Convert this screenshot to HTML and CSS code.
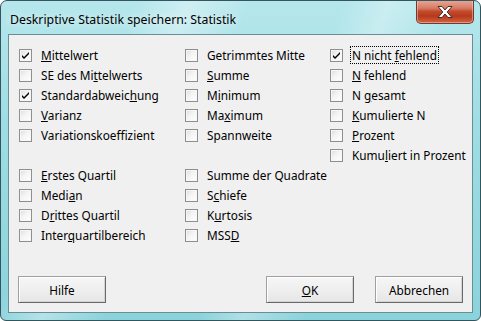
FILE: index.html
```html
<!DOCTYPE html>
<html>
<head>
    <title>Deskriptive Statistik speichern: Statistik</title>
    <link rel="stylesheet" href="styles.css">
</head>
<body>
    <div class="window">
        <div class="titlebar">
            <span class="title">Deskriptive Statistik speichern: Statistik</span>
            <div class="close-btn">
                <svg width="20" height="14" viewBox="0 0 20 14">
                    <path d="M3 1.5 L7 1.5 L10 5 L13 1.5 L17 1.5 L12.2 7 L17 12.5 L13 12.5 L10 9 L7 12.5 L3 12.5 L7.8 7 Z" fill="#fff" stroke="#4a2a24" stroke-width="1" stroke-linejoin="round"/>
                </svg>
            </div>
        </div>

        <div class="client">
            <div class="options">
                <div class="col col-1">
                    <div class="group">
                        <div class="opt"><span class="box checked"></span><span class="label"><u>M</u>ittelwert</span></div>
                        <div class="opt"><span class="box"></span><span class="label">SE des Mi<u>t</u>telwerts</span></div>
                        <div class="opt"><span class="box checked"></span><span class="label">Standardabweic<u>h</u>ung</span></div>
                        <div class="opt"><span class="box"></span><span class="label"><u>V</u>arianz</span></div>
                        <div class="opt"><span class="box"></span><span class="label">Variationskoeffizient</span></div>
                    </div>
                    <div class="group group-lower">
                        <div class="opt"><span class="box"></span><span class="label"><u>E</u>rstes Quartil</span></div>
                        <div class="opt"><span class="box"></span><span class="label">Medi<u>a</u>n</span></div>
                        <div class="opt"><span class="box"></span><span class="label">D<u>r</u>ittes Quartil</span></div>
                        <div class="opt"><span class="box"></span><span class="label">Inter<u>q</u>uartilbereich</span></div>
                    </div>
                </div>

                <div class="col col-2">
                    <div class="group">
                        <div class="opt"><span class="box"></span><span class="label">Getrimmtes Mitte</span></div>
                        <div class="opt"><span class="box"></span><span class="label"><u>S</u>umme</span></div>
                        <div class="opt"><span class="box"></span><span class="label">M<u>i</u>nimum</span></div>
                        <div class="opt"><span class="box"></span><span class="label">Ma<u>x</u>imum</span></div>
                        <div class="opt"><span class="box"></span><span class="label">Spannweite</span></div>
                    </div>
                    <div class="group group-lower">
                        <div class="opt"><span class="box"></span><span class="label">Summe der Quadrate</span></div>
                        <div class="opt"><span class="box"></span><span class="label">S<u>c</u>hiefe</span></div>
                        <div class="opt"><span class="box"></span><span class="label">K<u>u</u>rtosis</span></div>
                        <div class="opt"><span class="box"></span><span class="label">MSS<u>D</u></span></div>
                    </div>
                </div>

                <div class="col col-3">
                    <div class="group">
                        <div class="opt"><span class="box checked"></span><span class="label focused">N nicht <u>f</u>ehlend</span></div>
                        <div class="opt"><span class="box"></span><span class="label"><u>N</u> fehlend</span></div>
                        <div class="opt"><span class="box"></span><span class="label">N <u>g</u>esamt</span></div>
                        <div class="opt"><span class="box"></span><span class="label"><u>K</u>umulierte N</span></div>
                        <div class="opt"><span class="box"></span><span class="label"><u>P</u>rozent</span></div>
                        <div class="opt"><span class="box"></span><span class="label">Kumu<u>l</u>iert in Prozent</span></div>
                    </div>
                </div>
            </div>

            <div class="buttons">
                <button class="btn">Hilfe</button>
                <div class="buttons-right">
                    <button class="btn"><u>O</u>K</button>
                    <button class="btn">Abbrechen</button>
                </div>
            </div>
        </div>
    </div>
</body>
</html>
```

FILE: styles.css
```css
body {
    margin: 0;
    background: #fff;
    font-family: "Noto Sans", "Open Sans", sans-serif;
    font-size: 11.8px;
    color: #000;
}
.window {
    width: 481px;
    height: 321px;
    box-sizing: border-box;
    border: 1px solid #34555e;
    border-radius: 7px 7px 6px 6px;
    background:
        linear-gradient(115deg, rgba(255,255,255,0) 22%, rgba(255,255,255,0.35) 30%, rgba(255,255,255,0) 40%, rgba(255,255,255,0) 55%, rgba(255,255,255,0.3) 62%, rgba(255,255,255,0) 72%),
        linear-gradient(180deg, #b5e7ec 0%, #9edde4 40%, #8bd3db 100%);
    display: flex;
    flex-direction: column;
    overflow: hidden;
}
.titlebar {
    height: 33px;
    display: flex;
    justify-content: space-between;
    align-items: flex-start;
    flex-shrink: 0;
}
.title {
    margin: 10px 0 0 9px;
    font-size: 12.3px;
    color: #000;
    line-height: 17px;
    text-shadow: 0 0 8px rgba(255,255,255,0.9);
}
.close-btn {
    width: 58px;
    height: 24px;
    margin: -1px 6px 0 0;
    box-sizing: border-box;
    border: 1px solid #6e3a32;
    border-top: none;
    border-radius: 0 0 5px 5px;
    background: linear-gradient(180deg, #e9a899 0%, #d77c66 35%, #c24a2c 50%, #b8391c 70%, #d0643f 100%);
    box-shadow: inset 0 0 0 1px rgba(255,220,210,0.45);
    display: flex;
    align-items: center;
    justify-content: center;
}
.client {
    flex: 1;
    margin: 0 7px 7px;
    border: 1px solid #6d8d95;
    background: #f0f0f0;
    display: flex;
    flex-direction: column;
}
.options {
    display: flex;
    padding: 10px 0 0 10px;
}
.col-1 { width: 166px; }
.col-2 { width: 145px; }
.group-lower {
    margin-top: 20px;
}
.opt {
    height: 20px;
    display: flex;
    align-items: center;
    white-space: nowrap;
}
.box {
    width: 13px;
    height: 13px;
    box-sizing: border-box;
    border: 1px solid #8f8f8f;
    background: linear-gradient(135deg, #dcdcdc 0%, #f4f4f4 45%, #ffffff 100%);
    box-shadow: inset 0 0 0 1px #f6f6f6;
    margin-right: 7px;
    position: relative;
    flex-shrink: 0;
}
.box.checked::after {
    content: "";
    position: absolute;
    left: 2px;
    top: 2px;
    width: 7px;
    height: 7px;
    background: url("data:image/svg+xml;utf8,<svg xmlns='http://www.w3.org/2000/svg' width='7' height='7'><path d='M0 3 L2 5 L7 0 L7 2 L2 7 L0 5 Z' fill='black'/></svg>") no-repeat;
}
.label {
    border: 1px dotted transparent;
    padding: 0 1px;
    line-height: 16px;
}
.label.focused {
    border-color: #000;
}
u {
    text-decoration: underline;
    text-underline-offset: 1px;
}
.buttons {
    margin-top: auto;
    padding: 0 9px 9px;
    display: flex;
    justify-content: space-between;
}
.buttons-right {
    display: flex;
    gap: 21px;
}
.btn {
    width: 88px;
    height: 27px;
    font-family: "Noto Sans", sans-serif;
    font-size: 11.8px;
    color: #000;
    border: 1px solid #a0a0a0;
    border-right-color: #696969;
    border-bottom-color: #696969;
    border-radius: 0;
    background: linear-gradient(180deg, #f6f6f6 0%, #efefef 50%, #e6e6e6 100%);
    box-shadow: inset 1px 1px 0 #fff, inset -1px -1px 0 #d4d4d4;
    padding: 0;
}
```
